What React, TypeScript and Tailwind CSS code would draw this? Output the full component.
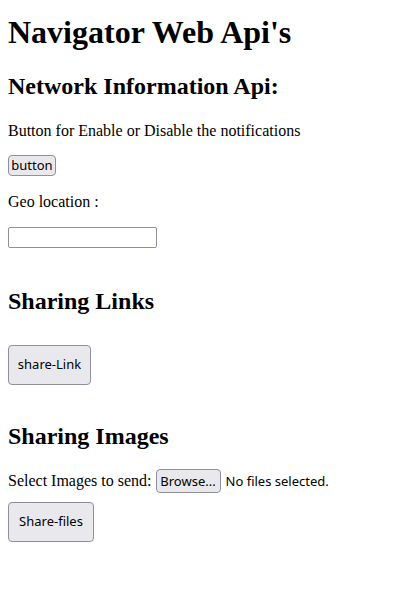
import React from 'react';

export default function App() {
  // form controls use a sans face, page text uses the serif default
  const btn =
    "font-['Noto_Sans',sans-serif] text-[13px] text-black bg-[#e9e9ed] border border-[#8f8f9d] rounded-[4px]";

  return (
    <div className="min-h-[609px] bg-white px-2 font-['Liberation_Serif',serif] text-black">
      <h1 className="mt-[14px] text-[32px] leading-[37px] font-bold">Navigator Web Api's</h1>

      <h2 className="mt-[21px] text-[24px] leading-[28px] font-bold">Network Information Api:</h2>
      <p className="mt-[22px] text-[16px] leading-[18px]">Button for Enable or Disable the notifications</p>
      <button className={`${btn} mt-[15px] block h-[21px] w-[48px] leading-none`}>button</button>
      <p className="mt-[17px] text-[16px] leading-[18px]">Geo location :</p>
      <input
        type="text"
        className="mt-[16px] block h-[21px] w-[149px] border border-[#8f8f9d] rounded-[2px] bg-white"
      />

      <h2 className="mt-[39px] text-[24px] leading-[28px] font-bold">Sharing Links</h2>
      <button className={`${btn} mt-[30px] block h-[40px] w-[83px]`}>share-Link</button>

      <h2 className="mt-[37px] text-[24px] leading-[28px] font-bold">Sharing Images</h2>
      <div className="mt-[19px] flex items-baseline text-[16px] leading-[18px]">
        <span>Select Images to send:</span>
        <button className={`${btn} ml-[4px] h-[24px] w-[65px]`}>Browse...</button>
        <span className="ml-[5px] font-['Noto_Sans',sans-serif] text-[13px]">No files selected.</span>
      </div>
      <button className={`${btn} mt-[9px] block h-[40px] w-[86px]`}>Share-files</button>
    </div>
  );
}
